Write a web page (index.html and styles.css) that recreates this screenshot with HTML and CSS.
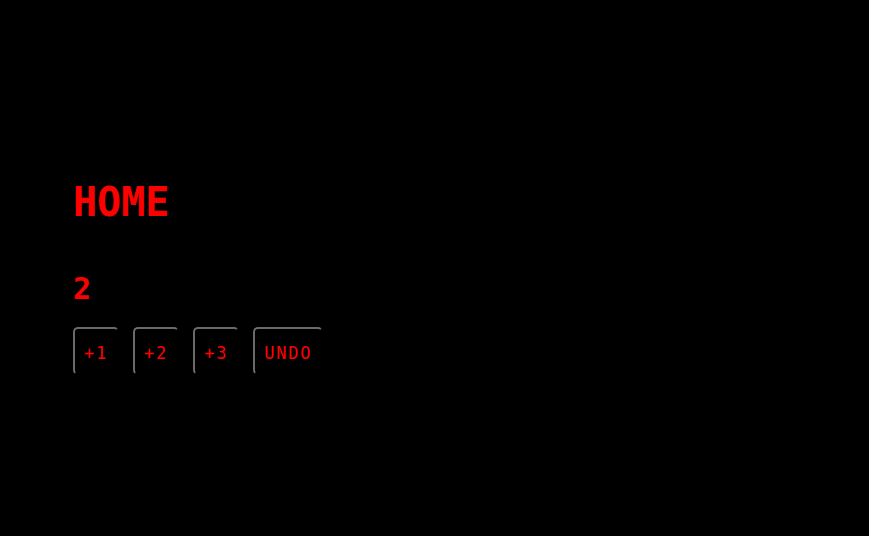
FILE: index.html
```html
<!DOCTYPE html>
<html lang="en">
<head>
<meta charset="utf-8">
<title>Home</title>
<link rel="stylesheet" href="styles.css">
</head>
<body>
<main class="page">
  <h1 class="title">HOME</h1>
  <div class="counter">2</div>
  <div class="actions">
    <button class="btn">+1</button>
    <button class="btn">+2</button>
    <button class="btn">+3</button>
    <button class="btn">UNDO</button>
  </div>
</main>
</body>
</html>
```
FILE: styles.css
```css
html, body {
  margin: 0;
  padding: 0;
  background: #000;
  height: 100%;
}
body {
  font-family: "DejaVu Sans Mono", "Liberation Mono", monospace;
  color: #ff0000;
}
.page {
  padding: 182px 0 0 73px;
}
.title {
  margin: 0;
  font-size: 40px;
  line-height: 40px;
  font-weight: bold;
  color: #ff0000;
}
.counter {
  margin-top: 52px;
  font-size: 30px;
  line-height: 30px;
  font-weight: bold;
}
.actions {
  margin-top: 23px;
  display: flex;
  gap: 14px;
}
.btn {
  box-sizing: border-box;
  height: 48px;
  padding: 5px 9px 0 9px;
  margin: 0;
  background: transparent;
  color: #ff0000;
  font-family: "DejaVu Sans Mono", "Liberation Mono", monospace;
  font-size: 17px;
  line-height: 39px;
  letter-spacing: 1.8px;
  border: 2px solid transparent;
  border-top-color: #6a6a6a;
  border-left-color: #6a6a6a;
  border-radius: 5px;
  cursor: pointer;
}
```
